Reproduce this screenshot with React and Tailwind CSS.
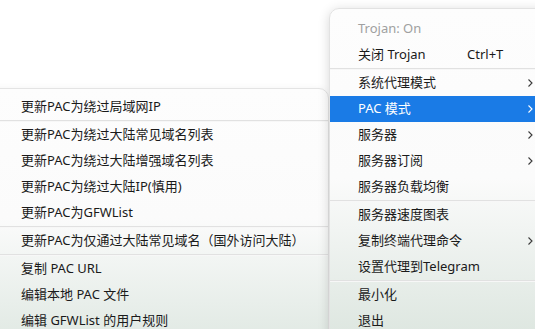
const font = { fontFamily: '"Noto Sans", "Noto Sans CJK SC", sans-serif' };

function Chevron({ white }) {
  return (
    <svg width="6" height="10" viewBox="0 0 6 10" className="shrink-0">
      <polyline points="1.5,1.5 5,5 1.5,8.5" fill="none" stroke={white ? '#ffffff' : '#3a3a3a'} strokeWidth="1.1" />
    </svg>
  );
}

function Sep() {
  return <div className="h-[2px] border-t border-[#e1e1e1] bg-[#f7f7f7]" />;
}

function MainItem({ label, shortcut, sub, active, muted }) {
  return (
    <div
      className={
        'h-[26px] flex items-center pl-[28px] pr-[2px] text-[13px] ' +
        (active ? 'bg-[#1a7be6] text-white' : muted ? 'text-[#a0a0a0]' : 'text-[#1a1a1a]')
      }
    >
      {shortcut ? (
        <>
          <span className="w-[109px]">{label}</span>
          <span>{shortcut}</span>
        </>
      ) : (
        <span className="flex-1">{label}</span>
      )}
      {sub && <Chevron white={active} />}
    </div>
  );
}

function SubItem({ label }) {
  return <div className="h-[26px] flex items-center pl-[30px] text-[13px] text-[#1a1a1a]">{label}</div>;
}

export default function App() {
  return (
    <div className="relative w-[535px] h-[329px] overflow-hidden bg-white" style={font}>
      {/* PAC submenu */}
      <div className="absolute left-[-10px] top-[88px] w-[339px] h-[260px] rounded-tr-[10px] border border-[#e4e4e4] pt-[5px] bg-gradient-to-b from-[#fdfdfd] via-[#fbfbfb] to-[#dfe8e2] shadow-[0_2px_8px_rgba(0,0,0,0.08)]">
        <SubItem label="更新PAC为绕过局域网IP" />
        <Sep />
        <SubItem label="更新PAC为绕过大陆常见域名列表" />
        <SubItem label="更新PAC为绕过大陆增强域名列表" />
        <SubItem label="更新PAC为绕过大陆IP(慎用)" />
        <SubItem label="更新PAC为GFWList" />
        <Sep />
        <SubItem label="更新PAC为仅通过大陆常见域名（国外访问大陆）" />
        <Sep />
        <SubItem label="复制 PAC URL" />
        <SubItem label="编辑本地 PAC 文件" />
        <SubItem label="编辑 GFWList 的用户规则" />
      </div>

      {/* tray menu */}
      <div className="absolute left-[329px] top-[8px] w-[220px] h-[340px] rounded-tl-[10px] border border-[#e2e2e2] pt-[7px] bg-gradient-to-b from-[#fdfdfd] via-[#fbfbfb] to-[#dbe5de] shadow-[0_2px_12px_rgba(0,0,0,0.16)]">
        <div className="w-[205px]">
          <MainItem label="Trojan: On" muted />
          <MainItem label="关闭 Trojan" shortcut="Ctrl+T" />
          <Sep />
          <MainItem label="系统代理模式" sub />
          <MainItem label="PAC 模式" sub active />
          <MainItem label="服务器" sub />
          <MainItem label="服务器订阅" sub />
          <MainItem label="服务器负载均衡" />
          <Sep />
          <MainItem label="服务器速度图表" />
          <MainItem label="复制终端代理命令" sub />
          <MainItem label="设置代理到Telegram" />
          <Sep />
          <MainItem label="最小化" />
          <MainItem label="退出" />
        </div>
      </div>
    </div>
  );
}
